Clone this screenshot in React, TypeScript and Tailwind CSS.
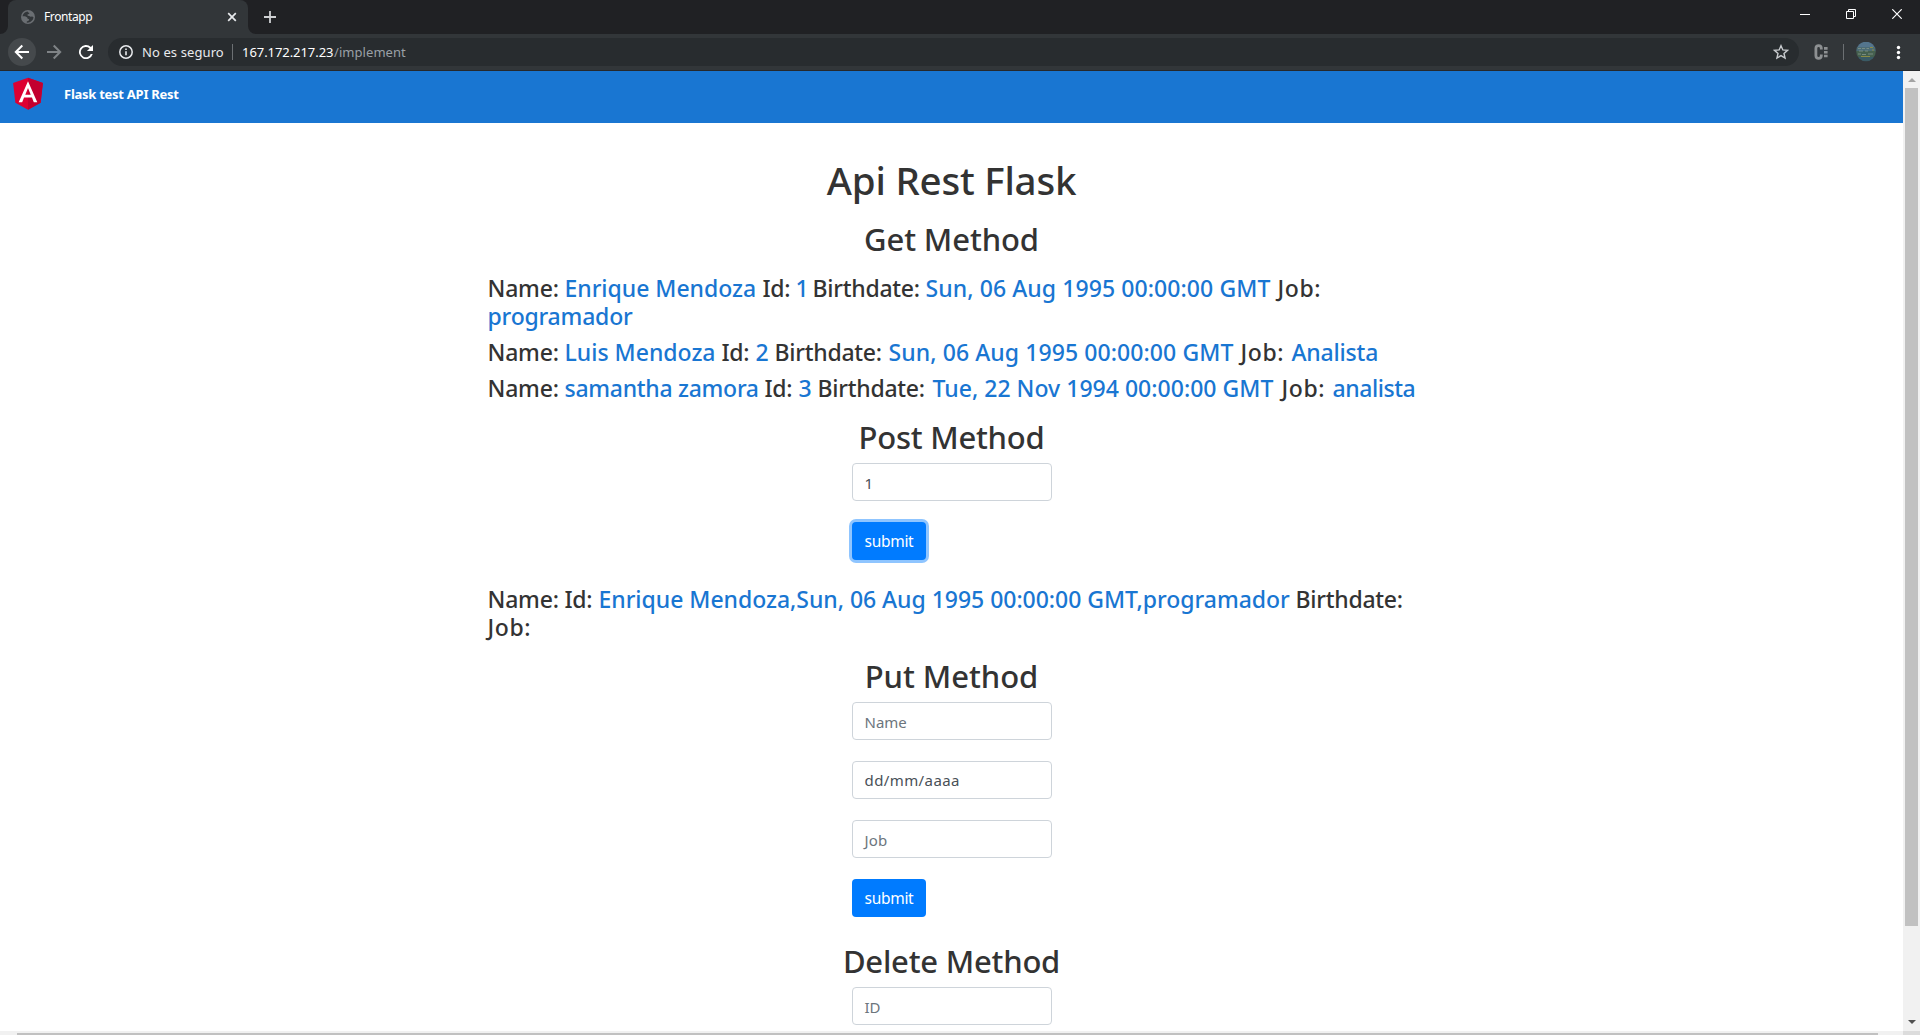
import React from 'react';

type Segment = { text: string; width: string; value?: boolean; tracking?: string };

const records: Segment[][] = [
  [
    { text: 'Name:', width: 'w-[77px]', tracking: 'tracking-[-0.2px]' },
    { text: 'Enrique Mendoza', width: 'w-[198px]', value: true, tracking: 'tracking-[-0.03px]' },
    { text: 'Id:', width: 'w-[33px]', tracking: 'tracking-[-0.3px]' },
    { text: '1', width: 'w-[17px]', value: true },
    { text: 'Birthdate:', width: 'w-[113px]', tracking: 'tracking-[-0.26px]' },
    { text: 'Sun, 06 Aug 1995 00:00:00 GMT', width: 'w-[352px]', value: true, tracking: 'tracking-[0.08px]' },
    { text: 'Job:', width: 'w-[52px]', tracking: 'tracking-[0.6px]' },
  ],
  [{ text: 'programador', width: 'w-[146px]', value: true, tracking: 'tracking-[-0.2px]' }],
  [
    { text: 'Name:', width: 'w-[77px]', tracking: 'tracking-[-0.2px]' },
    { text: 'Luis Mendoza', width: 'w-[157px]', value: true },
    { text: 'Id:', width: 'w-[34px]', tracking: 'tracking-[-0.3px]' },
    { text: '2', width: 'w-[19px]', value: true },
    { text: 'Birthdate:', width: 'w-[114px]', tracking: 'tracking-[-0.26px]' },
    { text: 'Sun, 06 Aug 1995 00:00:00 GMT', width: 'w-[352px]', value: true, tracking: 'tracking-[0.08px]' },
    { text: 'Job:', width: 'w-[51px]', tracking: 'tracking-[0.6px]' },
    { text: 'Analista', width: 'w-[90px]', value: true, tracking: 'tracking-[-0.2px]' },
  ],
  [
    { text: 'Name:', width: 'w-[77px]', tracking: 'tracking-[-0.2px]' },
    { text: 'samantha zamora', width: 'w-[200px]', value: true, tracking: 'tracking-[-0.28px]' },
    { text: 'Id:', width: 'w-[34px]', tracking: 'tracking-[-0.3px]' },
    { text: '3', width: 'w-[19px]', value: true },
    { text: 'Birthdate:', width: 'w-[115px]', tracking: 'tracking-[-0.26px]' },
    { text: 'Tue, 22 Nov 1994 00:00:00 GMT', width: 'w-[349px]', value: true, tracking: 'tracking-[0.02px]' },
    { text: 'Job:', width: 'w-[51px]', tracking: 'tracking-[0.6px]' },
    { text: 'analista', width: 'w-[90px]', value: true, tracking: 'tracking-[-0.44px]' },
  ],
];

const lookup: Segment[][] = [
  [
    { text: 'Name:', width: 'w-[77px]', tracking: 'tracking-[-0.2px]' },
    { text: 'Id:', width: 'w-[34px]', tracking: 'tracking-[-0.3px]' },
    {
      text: 'Enrique Mendoza,Sun, 06 Aug 1995 00:00:00 GMT,programador',
      width: 'w-[697px]',
      value: true,
      tracking: 'tracking-[-0.03px]',
    },
    { text: 'Birthdate:', width: 'w-[113px]', tracking: 'tracking-[-0.26px]' },
  ],
  [{ text: 'Job:', width: 'w-[52px]', tracking: 'tracking-[0.6px]' }],
];

function Line({ segments, spaced }: { segments: Segment[]; spaced?: boolean }) {
  return (
    <div
      className={`flex h-7 pl-[487.5px] text-[23px] font-medium leading-[28px] whitespace-nowrap ${spaced ? 'mb-2' : ''}`}
    >
      {segments.map((s) => (
        <span
          key={s.text}
          className={`shrink-0 ${s.width} ${s.tracking ?? ''} ${s.value ? 'text-[#1976d2]' : 'text-[#333333]'}`}
        >
          {s.text}
        </span>
      ))}
    </div>
  );
}

function Heading({ children, className }: { children: string; className: string }) {
  return (
    <h2 className={`h-[38px] text-center text-[31px] font-medium leading-[38px] text-[#333333] ${className}`}>
      {children}
    </h2>
  );
}

function Field({ value, className }: { value: string; className: string }) {
  return (
    <div
      className={`flex h-[38px] w-[200px] items-center rounded border border-[#ced4da] bg-white px-[11.5px] ${className}`}
    >
      {value}
    </div>
  );
}

function Submit({ focused }: { focused?: boolean }) {
  return (
    <button
      className={`flex h-[38px] w-[74px] items-center justify-center rounded bg-[#007bff] pt-[2px] text-[15.5px] tracking-[-0.3px] text-white ${
        focused ? 'shadow-[0_0_0_3px_#8fc5ff]' : ''
      }`}
    >
      submit
    </button>
  );
}

function TabStrip() {
  return (
    <div className="flex h-[34px] bg-[#202124] pl-2">
      <div className="relative flex h-full w-60 items-center rounded-t-lg bg-[#323639] pl-[13px] text-white">
        <svg className="absolute -left-2 bottom-0" width="8" height="8" viewBox="0 0 8 8">
          <path d="M8 0v8H0a8 8 0 0 0 8-8z" fill="#323639" />
        </svg>
        <svg className="absolute -right-2 bottom-0" width="8" height="8" viewBox="0 0 8 8">
          <path d="M0 0v8h8a8 8 0 0 1-8-8z" fill="#323639" />
        </svg>
        <svg width="14" height="14" viewBox="0 0 14 14">
          <circle cx="7" cy="7" r="7" fill="#6a6e72" />
          <path
            d="M6.6 1.4C4 1.6 1.9 3.500 1.500 6.200l2.500.1 2 .9c.5.4.2 1.100.9 1.500l1.300.6-.6 1.500-1.800.6-.1 1.200c3.400.3 6.600-2 6.800-5.300l-1.300-.8-1.700.3-1.300-.9-1.500-.2-.3-1.200 1.400-.6.7-.9-1.300-.6z"
            fill="#323639"
          />
        </svg>
        <span className="ml-[9px] text-[12px] tracking-[-0.4px]">Frontapp</span>
        <svg className="ml-auto mr-[11px]" width="10" height="10" viewBox="0 0 10 10">
          <path d="M1.200 1.200l7.600 7.600M8.800 1.200L1.200 8.800" stroke="#e8eaed" strokeWidth="1.700" />
        </svg>
      </div>
      <svg className="ml-4 mt-[11px]" width="12" height="12" viewBox="0 0 12 12">
        <path d="M6 0v12M0 6h12" stroke="#cfd1d3" strokeWidth="1.800" />
      </svg>
      <div className="ml-auto mr-[18px] mt-[9px] flex gap-9">
        <svg width="10" height="10" viewBox="0 0 10 10">
          <path d="M0 5.500h10" stroke="#fff" />
        </svg>
        <svg width="10" height="10" viewBox="0 0 10 10">
          <path d="M.5 2.500h7v7h-7zM2.500 2.500v-2h7v7h-2" fill="none" stroke="#fff" />
        </svg>
        <svg width="10" height="10" viewBox="0 0 10 10">
          <path d="M.3.3l9.400 9.400M9.700.3L.3 9.700" stroke="#fff" strokeWidth="1.200" />
        </svg>
      </div>
    </div>
  );
}

function Toolbar() {
  return (
    <div className="flex h-[37px] border-b border-[#26282b] bg-[#323639] pl-2 pt-1">
      <div className="flex size-7 items-center justify-center rounded-full bg-[#45494c]">
        <svg width="16" height="16" viewBox="0 0 16 16">
          <path d="M15 8H2M8.300 1.500L1.800 8l6.500 6.500" fill="none" stroke="#fff" strokeWidth="2" />
        </svg>
      </div>
      <svg className="ml-[10px] mt-[6px]" width="16" height="16" viewBox="0 0 16 16">
        <path d="M1 8h13M7.700 1.500L14.200 8l-6.500 6.500" fill="none" stroke="#7f8386" strokeWidth="2" />
      </svg>
      <svg className="ml-3 mt-1" width="22" height="20" viewBox="0 0 22 20">
        <path
          d="M16.900 5.100A7 7 0 1 0 18.700 12h-1.900a5.200 5.200 0 1 1-1.200-5.600L12.900 9H19V3z"
          fill="#fff"
        />
      </svg>
      <div className="ml-3 flex h-7 w-[1691px] items-center rounded-full bg-[#282c2f] pl-[11px] text-[13px]">
        <svg width="14" height="14" viewBox="0 0 14 14">
          <circle cx="7" cy="7" r="6.200" fill="none" stroke="#e8eaed" strokeWidth="1.500" />
          <path d="M7 6.200v4M7 3.500v1.500" stroke="#e8eaed" strokeWidth="1.600" />
        </svg>
        <span className="ml-[9px] w-[90px] pt-[2px] tracking-[0.1px] text-[#e8eaed]">No es seguro</span>
        <span className="h-4 w-px bg-[#6c7073]" />
        <span className="ml-[9px] w-[92px] pt-[2px] tracking-[-0.06px] text-white">167.172.217.23</span>
        <span className="pt-[2px] tracking-[0.06px] text-[#9aa0a6]">/implement</span>
        <svg className="ml-auto mr-[10px]" width="16" height="16" viewBox="0 0 16 16">
          <path
            d="M8 1.700l1.850 4.250 4.650.42-3.500 3.080 1.040 4.550L8 11.600 3.960 14 5 9.450 1.500 6.370l4.650-.42z"
            fill="none"
            stroke="#c9cccf"
            strokeWidth="1.400"
          />
        </svg>
      </div>
      <svg className="ml-[14px] mt-[6px]" width="16" height="16" viewBox="0 0 16 16">
        <path
          d="M8.300 5.500V4.200A2.700 2.700 0 0 0 5.600 1.600 2.700 2.700 0 0 0 2.900 4.200v7.600a2.700 2.700 0 0 0 2.700 2.600 2.700 2.700 0 0 0 2.700-2.600v-1.300"
          fill="none"
          stroke="#8d9092"
          strokeWidth="2.800"
        />
        <path d="M11 4.400h3.600M11 8.200h3.600M11 12h3.600" stroke="#8d9092" strokeWidth="2.600" />
      </svg>
      <span className="ml-[14px] mt-[6px] h-4 w-px bg-[#6c7073]" />
      <svg className="ml-3 mt-1" width="20" height="20" viewBox="0 0 20 20">
        <defs>
          <clipPath id="avatar">
            <circle cx="10" cy="9.500" r="9.800" />
          </clipPath>
        </defs>
        <g clipPath="url(#avatar)">
          <path fill="#54758d" d="M0 0h20v6H0z" />
          <path fill="#4c6b75" d="M0 5h20v4H0z" />
          <path fill="#45604f" d="M0 9h20v6H0z" />
          <path fill="#3a5a64" d="M0 15h20v5H0z" />
          <path
            d="M2 6.500h3M6 6.500h3M10.500 6.500h2.500M3 9h4M9 9h3M2 12h3M6 12.500h4M12 12h5"
            stroke="#7d9187"
            strokeWidth=".9"
          />
          <path d="M14 5.500h3M16 8h2M5 14.500h9" stroke="#8a8b45" strokeWidth="1" />
        </g>
      </svg>
      <svg className="ml-[20px] mt-[6px]" width="5" height="16" viewBox="0 0 5 16">
        <circle cx="2.500" cy="3.500" r="1.700" fill="#fff" />
        <circle cx="2.500" cy="8.500" r="1.700" fill="#fff" />
        <circle cx="2.500" cy="13.500" r="1.700" fill="#fff" />
      </svg>
    </div>
  );
}

function Navbar() {
  return (
    <nav className="flex h-[52px] bg-[#1976d2] pl-2">
      <svg className="mt-[2px]" width="40" height="40" viewBox="0 0 250 250">
        <path fill="#dd0031" d="M125 30L31.900 63.200l14.200 123.100L125 230l78.900-43.700 14.200-123.100z" />
        <path fill="#c3002f" d="M125 30v200l78.900-43.700 14.200-123.100z" />
        <path
          fill="#fff"
          d="M125 52.100L66.800 182.600h21.700l11.700-29.200h49.400l11.700 29.200H183L125 52.100zm17 83.300h-34l17-40.900z"
        />
      </svg>
      <span className="ml-4 mt-[13px] text-[13px] font-bold leading-5 tracking-[-0.26px] text-white">
        Flask test API Rest
      </span>
    </nav>
  );
}

function VerticalScrollbar() {
  return (
    <div className="flex w-[17px] flex-col items-center bg-[#f1f1f1]">
      <svg className="mt-[7px]" width="8" height="4" viewBox="0 0 8 4">
        <path d="M4 0l4 4H0z" fill="#a3a3a3" />
      </svg>
      <div className="mt-[6px] h-[838px] w-[13px] bg-[#c1c1c1]" />
      <svg className="mt-[94px]" width="8" height="4" viewBox="0 0 8 4">
        <path d="M0 0h8L4 4z" fill="#505050" />
      </svg>
    </div>
  );
}

export default function App() {
  return (
    <div className="flex h-[1035px] w-[1920px] flex-col overflow-hidden bg-white font-['Noto_Sans',sans-serif]">
      <TabStrip />
      <Toolbar />
      <div className="flex h-[960px]">
        <div className="h-full w-[1903px] overflow-hidden">
          <Navbar />
          <main className="pt-[33px]">
            <h1 className="h-12 text-center text-[38.5px] font-medium leading-[48px] tracking-[-0.2px] text-[#333333]">
              Api Rest Flask
            </h1>
            <Heading className="my-4 tracking-[-0.1px]">Get Method</Heading>
            <Line segments={records[0]} />
            <Line segments={records[1]} spaced />
            <Line segments={records[2]} spaced />
            <Line segments={records[3]} />
            <Heading className="mt-4 tracking-[-0.25px]">Post Method</Heading>
            <div className="ml-[852px] mt-[7px] flex flex-col gap-[21px]">
              <Field value="1" className="pt-[2px] text-[15px] text-[#495057]" />
              <Submit focused />
            </div>
            <div className="mt-[25px]">
              <Line segments={lookup[0]} />
              <Line segments={lookup[1]} />
            </div>
            <Heading className="mt-4 tracking-[-0.05px]">Put Method</Heading>
            <div className="ml-[852px] mt-[7px] flex flex-col gap-[21px]">
              <Field value="Name" className="pt-[2px] text-[15px] text-[#6c757d]" />
              <Field value="dd/mm/aaaa" className="text-[15px] tracking-[0.4px] text-[#495057]" />
              <Field value="Job" className="pt-[2px] text-[15px] tracking-[0.2px] text-[#6c757d]" />
              <Submit />
            </div>
            <Heading className="mt-[25px] tracking-[-0.22px]">Delete Method</Heading>
            <div className="ml-[852px] mt-[7px]">
              <Field value="ID" className="pt-[2px] text-[15px] text-[#6c757d]" />
            </div>
          </main>
        </div>
        <VerticalScrollbar />
      </div>
      <div className="flex h-1">
        <div className="w-[1903px] bg-[#f1f1f1] pl-[17px] pt-[2px]">
          <div className="h-[2px] w-[1861px] bg-[#c1c1c1]" />
        </div>
        <div className="w-[17px] bg-[#dcdcdc]" />
      </div>
    </div>
  );
}
